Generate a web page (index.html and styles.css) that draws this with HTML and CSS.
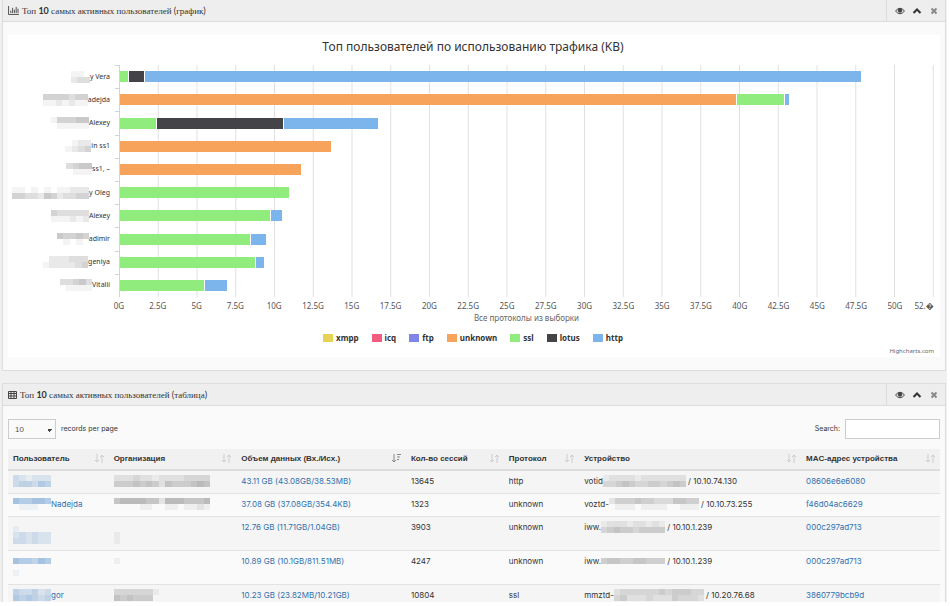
FILE: index.html
```
<!DOCTYPE html>
<html lang="ru">
<head>
    <meta charset="UTF-8">
    <meta name="viewport" content="width=device-width, initial-scale=1.0">
    <title>Топ 10 самых активных пользователей</title>
    <link rel="stylesheet" href="styles.css">
</head>
<body>
<div class="page">

    <!-- Chart panel -->
    <section class="panel">
        <header class="panel-header">
            <svg class="icon-chart" viewBox="0 0 12 10"><path d="M.5 0v9.500H12M3 8V5M5 8V2M7 8V4M9 8V1M11 8V3" fill="none" stroke="#444"/></svg>
            <h2>Топ <b>10</b> самых активных пользователей <i>(</i>график<i>)</i></h2>
            <div class="panel-tools">
                <button type="button" aria-label="Просмотр"><svg viewBox="0 0 10 8"><path d="M.5 4Q5-1.500 9.500 4 5 9.500.5 4z" fill="none" stroke="#444"/><circle cx="5" cy="3.500" r="2.200" fill="#444"/></svg></button>
                <button type="button" aria-label="Свернуть"><svg viewBox="0 0 10 8"><path d="M1.500 6 5 2.500 8.500 6" fill="none" stroke="#333" stroke-width="2"/></svg></button>
                <button type="button" aria-label="Закрыть"><svg viewBox="0 0 10 8"><path d="M2.500 1.500l5 5M7.500 1.500l-5 5" fill="none" stroke="#888" stroke-width="2"/></svg></button>
            </div>
        </header>
        <div class="panel-body">
            <div class="chart">
                <h3>Топ пользователей по использованию трафика (KB)</h3>
                <div class="chart-main">
                    <div class="names">
                        <div><span class="mask" data-cells="110 233"></span>y Vera</div>
                        <div><span class="mask" data-cells="4444344 1121211"></span>adejda</div>
                        <div><span class="mask" data-cells="144455 011111"></span>Alexey</div>
                        <div><span class="mask" data-cells="0122 1234"></span>in ss1</div>
                        <div><span class="mask" data-cells="3455 0111"></span>ss1, –</div>
                        <div><span class="mask" data-cells="110101011222 443325423344"></span>y Oleg</div>
                        <div><span class="mask" data-cells="433333 111212"></span>Alexey</div>
                        <div><span class="mask" data-cells="54454 01010"></span>adimir</div>
                        <div><span class="mask" data-cells="0222333 1222234"></span>geniya</div>
                        <div><span class="mask" data-cells="33453 01111"></span>Vitalii</div>
                    </div>
                    <div class="plot">
                        <div class="bar"><span class="ssl" style="width:1.100%"></span><span class="lotus" style="width:2%"></span><span class="http" style="width:88%"></span></div>
                        <div class="bar"><span class="unknown" style="width:75.800%"></span><span class="ssl" style="width:5.900%"></span><span class="http" style="width:.6%"></span></div>
                        <div class="bar"><span class="ssl" style="width:4.600%"></span><span class="lotus" style="width:15.600%"></span><span class="http" style="width:11.600%"></span></div>
                        <div class="bar"><span class="unknown" style="width:26.100%"></span></div>
                        <div class="bar"><span class="unknown" style="width:22.300%"></span></div>
                        <div class="bar"><span class="ssl" style="width:20.900%"></span></div>
                        <div class="bar"><span class="ssl" style="width:18.500%"></span><span class="http" style="width:1.500%"></span></div>
                        <div class="bar"><span class="ssl" style="width:16.100%"></span><span class="http" style="width:2%"></span></div>
                        <div class="bar"><span class="ssl" style="width:16.700%"></span><span class="http" style="width:1.100%"></span></div>
                        <div class="bar"><span class="ssl" style="width:10.500%"></span><span class="http" style="width:2.800%"></span></div>
                    </div>
                </div>
                <div class="scale">
                    <span>0G</span><span>2.5G</span><span>5G</span><span>7.5G</span><span>10G</span><span>12.5G</span><span>15G</span><span>17.5G</span><span>20G</span><span>22.5G</span><span>25G</span><span>27.5G</span><span>30G</span><span>32.5G</span><span>35G</span><span>37.5G</span><span>40G</span><span>42.5G</span><span>45G</span><span>47.5G</span><span>50G</span><span class="last">52.�</span>
                </div>
                <p class="scale-title">Все протоколы из выборки</p>
                <ul class="legend">
                    <li><span class="xmpp"></span>xmpp</li>
                    <li><span class="icq"></span>icq</li>
                    <li><span class="ftp"></span>ftp</li>
                    <li><span class="unknown"></span>unknown</li>
                    <li><span class="ssl"></span>ssl</li>
                    <li><span class="lotus"></span>lotus</li>
                    <li><span class="http"></span>http</li>
                </ul>
                <a class="credits" href="#">Highcharts.com</a>
            </div>
        </div>
    </section>

    <!-- Table panel -->
    <section class="panel">
        <header class="panel-header">
            <svg class="icon-table" viewBox="0 0 9 8"><path d="M.5.5h8v7h-8zM.5 2.500h8M.5 5h8M3 .5v7M6 .5v7" fill="none" stroke="#444"/></svg>
            <h2>Топ <b>10</b> самых активных пользователей <i>(</i>таблица<i>)</i></h2>
            <div class="panel-tools">
                <button type="button" aria-label="Просмотр"><svg viewBox="0 0 10 8"><path d="M.5 4Q5-1.500 9.500 4 5 9.500.5 4z" fill="none" stroke="#444"/><circle cx="5" cy="3.500" r="2.200" fill="#444"/></svg></button>
                <button type="button" aria-label="Свернуть"><svg viewBox="0 0 10 8"><path d="M1.500 6 5 2.500 8.500 6" fill="none" stroke="#333" stroke-width="2"/></svg></button>
                <button type="button" aria-label="Закрыть"><svg viewBox="0 0 10 8"><path d="M2.500 1.500l5 5M7.500 1.500l-5 5" fill="none" stroke="#888" stroke-width="2"/></svg></button>
            </div>
        </header>
        <div class="panel-body">
            <div class="controls">
                <div class="length">
                    <select id="length"><option>10</option><option>25</option><option>50</option></select>
                    <label for="length">records per page</label>
                </div>
                <div class="filter">
                    <label for="search">Search:</label>
                    <input type="search" id="search">
                </div>
            </div>
            <table>
                <colgroup><col class="c-user"><col class="c-org"><col class="c-data"><col class="c-count"><col class="c-proto"><col class="c-device"><col></colgroup>
                <thead>
                    <tr>
                        <th>Пользователь</th>
                        <th>Организация</th>
                        <th class="sorted">Объем данных (Вх./Исх.)</th>
                        <th>Кол-во сессий</th>
                        <th>Протокол</th>
                        <th>Устройство</th>
                        <th>MAC-адрес устройства</th>
                    </tr>
                </thead>
                <tbody>
                    <tr>
                        <td><a href="#"><span class="mask" data-cells="321222 344354"></span></a></td>
                        <td><span class="mask" data-cells="222322122223333 444545425444565"></span></td>
                        <td><a href="#">43.11 GB (43.08GB/38.53MB)</a></td>
                        <td>13645</td>
                        <td>http</td>
                        <td>votid<span class="mask" data-cells="1222212222222 3345433443454"></span> / 10.10.74.130</td>
                        <td><a href="#">08606e6e6080</a></td>
                    </tr>
                    <tr>
                        <td><a href="#"><span class="mask" data-cells="655665 011100"></span>Nadejda</a></td>
                        <td><span class="mask" data-cells="566665526665556 000011001101121"></span></td>
                        <td><a href="#">37.08 GB (37.08GB/354.4KB)</a></td>
                        <td>1323</td>
                        <td>unknown</td>
                        <td>voztd-<span class="mask" data-cells="24445443335544 01110111100111"></span> / 10.10.73.255</td>
                        <td><a href="#">f46d04ac6629</a></td>
                    </tr>
                    <tr class="tall">
                        <td><a href="#"><span class="mask low" data-cells="100000 232322 332322"></span></a></td>
                        <td><span class="mask low" data-cells="0 1 1"></span></td>
                        <td><a href="#">12.76 GB (11.71GB/1.04GB)</a></td>
                        <td>3903</td>
                        <td>unknown</td>
                        <td>iww.<span class="mask" data-cells="1222122121 3454434444"></span> / 10.10.1.239</td>
                        <td><a href="#">000c297ad713</a></td>
                    </tr>
                    <tr class="tall">
                        <td><a href="#"><span class="mask mid" data-cells="655465 000000 100000"></span></a></td>
                        <td><span class="mask mid" data-cells="1"></span></td>
                        <td><a href="#">10.89 GB (10.1GB/811.51MB)</a></td>
                        <td>4247</td>
                        <td>unknown</td>
                        <td>iww.<span class="mask mid" data-cells="4554455444"></span> / 10.10.1.239</td>
                        <td><a href="#">000c297ad713</a></td>
                    </tr>
                    <tr class="tall">
                        <td><a href="#"><span class="mask" data-cells="433423 545434"></span>gor</a></td>
                        <td><span class="mask" data-cells="3333331 5454440"></span></td>
                        <td><a href="#">10.23 GB (23.82MB/10.21GB)</a></td>
                        <td>10804</td>
                        <td>ssl</td>
                        <td>mmztd-<span class="mask" data-cells="23333334344433 34222322243332"></span> / 10.20.76.68</td>
                        <td><a href="#">3860779bcb9d</a></td>
                    </tr>
                </tbody>
            </table>
        </div>
    </section>
</div>
<script src="script.js"></script>
</body>
</html>
```
FILE: styles.css
```
* {
    box-sizing: border-box;
}
body {
    margin: 0;
    background: #fff;
    color: #333;
    font: 8px/11px "Liberation Sans", Arial, sans-serif;
}
.page {
    height: calc(100vh - 4px);
    margin-right: 3px;
    padding: 0 1px 0 2px;
    background: #f0f0f0;
    overflow: hidden;
}
a {
    color: #3071b0;
    text-decoration: none;
}

/* Panels */
.panel {
    margin-bottom: 12px;
    border: 1px solid #ddd;
    border-top: 0;
    background: #fafafa;
}
.panel + .panel {
    border-top: 1px solid #ddd;
}
.panel-header {
    display: flex;
    align-items: center;
    gap: 3px;
    height: 22px;
    padding-left: 5px;
    background: #eee;
    border-bottom: 1px solid #ddd;
}
.panel-header h2 {
    flex: 1;
    margin: 0;
    font: 9px/12px "Liberation Serif", serif;
    color: #333;
}
.panel-header b,
.panel-header i {
    font-family: Lato, sans-serif;
    font-style: normal;
}
.icon-chart {
    width: 11px;
    height: 9px;
}
.icon-table {
    width: 9px;
    height: 8px;
}
.panel-tools {
    display: flex;
    align-items: center;
    gap: 7px;
    height: 100%;
    padding: 0 6px 0 8px;
    border-left: 1px solid #ddd;
}
.panel-tools button {
    width: 10px;
    height: 8px;
    padding: 0;
    border: 0;
    background: none;
}
.panel-tools svg {
    display: block;
}
.panel-body {
    padding: 13px 5px;
}

/* Chart */
.chart {
    padding: 5px 6px 1px 4px;
    background: #fff;
    font: 8px/10px "Noto Sans", sans-serif;
}
.chart h3 {
    margin: 0 0 12px;
    font-size: 12px;
    line-height: 13px;
    font-weight: 400;
    text-align: center;
}
.chart-main {
    display: flex;
    height: 232px;
}
.names {
    display: flex;
    flex-direction: column;
    width: 107px;
    font-size: 7px;
}
.names div {
    display: flex;
    flex: 1;
    align-items: center;
    justify-content: flex-end;
    padding-right: 9px;
    white-space: nowrap;
}
.plot {
    flex: 1;
    display: flex;
    flex-direction: column;
    border-left: 1px solid #c6d5ea;
    background: linear-gradient(to left, #e0e0e0 1px, transparent 1px) 0 0 / calc(100% / 21) 100%;
}
.bar {
    display: flex;
    flex: 1;
    align-items: center;
}
.bar span {
    height: 11px;
    border-right: 1px solid #fff;
}
.bar::before {
    content: "";
    align-self: flex-start;
    width: 5px;
    height: 1px;
    margin-left: -5px;
    background: #c6d5ea;
}
.scale {
    display: flex;
    margin: 4px 0 2px 107px;
    color: #555;
}
.scale span {
    width: calc(100% / 21);
    flex-shrink: 0;
    text-align: center;
    transform: translateX(-50%);
}
.scale .last {
    text-align: right;
    transform: translateX(-100%);
}
.scale-title {
    margin: 0 0 10px 107px;
    text-align: center;
    color: #666;
}
.legend {
    display: flex;
    justify-content: center;
    gap: 13px;
    margin: 0 0 3px;
    padding: 0;
    list-style: none;
    font-weight: 700;
}
.legend li {
    display: flex;
    align-items: center;
    gap: 3px;
}
.legend span {
    width: 10px;
    height: 8px;
}
.xmpp { background: #e4d354; }
.icq { background: #f15c80; }
.ftp { background: #8085e9; }
.unknown { background: #f7a35c; }
.ssl { background: #90ed7d; }
.lotus { background: #434348; }
.http { background: #7cb5ec; }
.credits {
    display: block;
    font-size: 6px;
    text-align: right;
    color: #666;
}

/* Blanked-out names */
.mask {
    display: inline-block;
    color: #777;
}
.mask svg {
    display: block;
}
a .mask {
    color: #4a86c5;
}
td .mask {
    margin-top: 4px;
    vertical-align: top;
}
td .mid {
    margin-top: 7px;
}
td .low {
    margin-top: 9px;
}

/* Table controls */
.controls {
    display: flex;
    justify-content: space-between;
    margin-bottom: 10px;
}
.controls label {
    font: 7px/10px Inter, sans-serif;
}
.length,
.filter {
    display: flex;
    align-items: center;
    gap: 5px;
}
.controls select,
.controls input {
    height: 20px;
    border: 1px solid #ccc;
    border-radius: 0;
    background: #fff;
    font: inherit;
    color: #555;
}
.controls select {
    appearance: none;
    width: 48px;
    padding: 0 6px;
    background: linear-gradient(to bottom right, #444 50%, transparent 50%) 41px 9px / 3px 3px no-repeat,
        linear-gradient(to bottom left, #444 50%, transparent 50%) 38px 9px / 3px 3px no-repeat, #fafafa;
}
.controls input {
    width: 95px;
}

/* Table */
table {
    width: 100%;
    table-layout: fixed;
    border-collapse: collapse;
}
.c-user { width: 10.8%; }
.c-org { width: 13.7%; }
.c-data { width: 18.2%; }
.c-count { width: 10.5%; }
.c-proto { width: 8.1%; }
.c-device { width: 23.8%; }
th {
    padding: 4px 5px 5px;
    border-bottom: 2px solid #ddd;
    background: #f1f1f1;
    text-align: left;
    white-space: nowrap;
}
td {
    height: 23px;
    padding: 0 5px;
    border-bottom: 1px solid #e2e2e2;
    vertical-align: top;
    font-family: Inter, sans-serif;
    line-height: 20px;
    white-space: nowrap;
}
.tall td {
    height: 34px;
}
tbody tr:nth-child(odd) {
    background: #f5f5f5;
}
th svg {
    float: right;
    width: 9px;
    height: 9px;
    margin-top: 1px;
}
```
FILE: script.js
```
const NS = 'http://www.w3.org/2000/svg';

// Each digit is one block, the higher the darker
document.querySelectorAll('.mask').forEach(mask => {
    const rows = mask.dataset.cells.split(' ');
    const cols = rows[0].length;
    const svg = document.createElementNS(NS, 'svg');
    svg.setAttribute('viewBox', `0 0 ${cols} ${rows.length}`);
    svg.setAttribute('width', Math.round(cols * 6.4));
    svg.setAttribute('height', rows.length * 6);
    svg.setAttribute('preserveAspectRatio', 'none');
    svg.setAttribute('shape-rendering', 'crispEdges');
    rows.forEach((row, y) => [...row].forEach((level, x) => {
        const rect = document.createElementNS(NS, 'rect');
        rect.setAttribute('x', x);
        rect.setAttribute('y', y);
        rect.setAttribute('width', 1);
        rect.setAttribute('height', 1);
        rect.setAttribute('fill', 'currentColor');
        rect.setAttribute('opacity', level * 0.08);
        svg.append(rect);
    }));
    mask.append(svg);
});

// Sort arrows in the table head
document.querySelectorAll('th').forEach(th => {
    const sorted = th.classList.contains('sorted');
    const path = sorted
        ? 'M2 0v8M0 6l2 2 2-2M5 .5h4M5 3h3M5 5.500h2'
        : 'M2 0v8M0 6l2 2 2-2M7 9V1M5 3l2-2 2 2';
    th.insertAdjacentHTML('afterbegin', `<svg viewBox="0 0 9 9"><path d="${path}" fill="none" stroke="${sorted ? '#888' : '#ccc'}"/></svg>`);
});
```
